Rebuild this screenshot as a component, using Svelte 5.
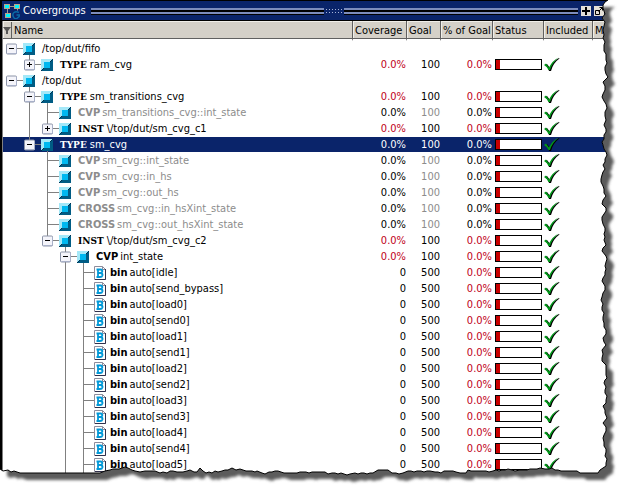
<script>
  const groups = [
    { level: 0, text: '/top/dut/fifo', open: true },
    { level: 1, kind: 'TYPE', text: 'ram_cvg', open: false, last: true, tone: 'low', goal: 100 },
    { level: 0, text: '/top/dut', open: true },
    { level: 1, kind: 'TYPE', text: 'sm_transitions_cvg', open: true, tone: 'low', goal: 100 },
    { level: 2, kind: 'CVP', text: 'sm_transitions_cvg::int_state', through: [1], dim: true, goal: 100 },
    { level: 2, kind: 'INST', text: '\\/top/dut/sm_cvg_c1', open: false, through: [1], last: true, tone: 'low', goal: 100 },
    { level: 1, kind: 'TYPE', text: 'sm_cvg', open: true, last: true, selected: true, goal: 100 },
    { level: 2, kind: 'CVP', text: 'sm_cvg::int_state', dim: true, goal: 100 },
    { level: 2, kind: 'CVP', text: 'sm_cvg::in_hs', dim: true, goal: 100 },
    { level: 2, kind: 'CVP', text: 'sm_cvg::out_hs', dim: true, goal: 100 },
    { level: 2, kind: 'CROSS', text: 'sm_cvg::in_hsXint_state', dim: true, goal: 100 },
    { level: 2, kind: 'CROSS', text: 'sm_cvg::out_hsXint_state', dim: true, goal: 100 },
    { level: 2, kind: 'INST', text: '\\/top/dut/sm_cvg_c2', open: true, last: true, tone: 'low', goal: 100 },
    { level: 3, kind: 'CVP', text: 'int_state', open: true, tone: 'low', goal: 100 },
  ];
  const bins = ['idle', 'send_bypass', 'load0', 'send0', 'load1', 'send1', 'load2', 'send2', 'load3', 'send3', 'load4', 'send4', 'load5'];
  const rows = [
    ...groups,
    ...bins.map((b) => ({ level: 4, kind: 'bin', text: `auto[${b}]`, bin: true, through: [3], tone: 'low', count: 0, goal: 500 })),
  ];
  const guideX = (level) => 8.5 + level * 18;

  // Torn paper outline: right edge going down, then bottom edge going left.
  const right = [[608,0],[605,2],[603,8],[605,14],[602,18],[605,22],[603,30],[604,35],[604,45],[606,60],[605,70],[608,77],[603,82],[605,90],[602,97],[606,104],[605,112],[606,120],[604,125],[606,132],[602,142],[606,152],[605,162],[603,172],[601,182],[606,196],[602,204],[606,208],[602,220],[605,228],[604,240],[606,245],[602,251],[606,256],[605,275],[602,281],[605,286],[602,297],[603,320],[606,330],[603,338],[606,345],[602,350],[602,358],[606,368],[607,378],[605,380],[606,403],[603,406],[605,413],[607,418],[603,423],[606,431],[603,438],[604,446],[606,452],[606,466],[600,470],[598,473]];
  const bottom = [[580,473],[577,471],[570,471],[558,470],[552,468],[545,469],[540,468],[520,470],[515,471],[508,469],[505,470],[480,471],[468,470],[466,473],[450,471],[435,472],[430,471],[408,471],[403,473],[392,473],[388,470],[378,470],[373,473],[355,473],[350,474],[335,473],[318,472],[300,472],[290,473],[275,471],[262,473],[257,471],[255,472],[240,469],[232,468],[228,470],[215,471],[206,473],[200,468],[197,472],[190,470],[180,472],[170,471],[160,473],[155,471],[145,471],[140,472],[135,471],[128,468],[125,467],[110,470],[105,471],[100,473],[20,473],[14,471],[8,470],[3,471],[0,469]];
  function rough(points, vertical) {
    const out = [];
    points.forEach(([x, y], i) => {
      out.push([x, y]);
      const next = points[i + 1];
      if (!next) return;
      const span = Math.abs(vertical ? next[1] - y : next[0] - x);
      if (span > 60) return;
      const n = Math.floor(span / 3);
      for (let k = 1; k < n; k++) {
        const t = k / n;
        const j = ((i * 7 + k * 5) % 3) - 1;
        out.push([Math.round(x + (next[0] - x) * t) + (vertical ? j : 0), Math.round(y + (next[1] - y) * t) + (vertical || j < 0 ? 0 : j)]);
      }
    });
    return out;
  }
  const edge = [...rough(right, true), ...rough(bottom, false)].map((p) => p.join(',')).join('L');
  const page = `M0,0L${edge}Z`;
  const outside = `M-5,-5H629V494H-5Z${page}`;
</script>

<main>
  <div class="panel">
    <header>
      <svg class="logo" width="16" height="16" viewBox="0 0 16 16" aria-hidden="true">
        <path d="M3.500 3v8M4 3.500h9.500v4" fill="none" stroke="#a89c8c" />
        <path d="M0 1h6v5H0zM10 1h6v5h-6zM1 10h6v5H1z" fill="#b8a48c" />
        <path d="M1 2h4v3H1zM11 2h4v3h-4zM2 11h4v3H2z" fill="#00f4ff" />
        <path d="M15 9.500q-3-1.500-5 0t-.5 4.500 4 1 2-3h-3" fill="none" stroke="#0a6ca8" stroke-width="1.500" />
      </svg>
      <h1>Covergroups</h1>
      <div class="grip"></div>
      <div class="dots"></div>
      <div class="grip"></div>
      <button aria-label="Maximize"><svg width="10" height="10" viewBox="0 0 10 10"><path d="M4 1h2v3h3v2H6v3H4V6H1V4h3z" /></svg></button>
      <button aria-label="Undock"><svg width="10" height="10" viewBox="0 0 10 10"><path d="M1.500 4.500h4v4h-4zM4.500 5.500l4-4M5.500 1.500h3v3" fill="none" stroke="#000" /></svg></button>
    </header>

    <table>
      <colgroup>
        <col /><col class="w54" /><col class="w34" /><col class="w52" /><col class="w51" /><col class="w49" /><col class="w16" />
      </colgroup>
      <thead>
        <tr>
          <th class="name">
            <div>
              <button class="filter" aria-label="Filter columns"><svg width="8" height="8" viewBox="0 0 8 8"><path d="M0 1h8L5 5v3H3V5z" fill="#555" /></svg></button>
              <span>Name</span>
            </div>
          </th>
          <th>Coverage</th><th>Goal</th><th>% of Goal</th><th>Status</th><th>Included</th><th>M</th>
        </tr>
      </thead>
      <tbody>
        {#each rows as row}
          {@const x = guideX(row.level)}
          {@const w = row.bin ? 106 : 38 + row.level * 18}
          <tr class:selected={row.selected} class:dim={row.dim} class:low={row.tone === 'low'}>
            <td class="tree">
              <div>
                <svg width={w} height="16" viewBox="0 0 {w} 16" aria-hidden="true">
                  <g stroke="#808080" fill="none">
                    {#each row.through ?? [] as l}<path d="M{guideX(l)} 0V16" />{/each}
                    {#if row.level > 0}<path d="M{x} 0V{row.last ? 8 : 16}" />{/if}
                    <path d="M{x} 7.500H{x + 13}" />
                    {#if row.open}<path d="M{x + 18} 12V16" />{/if}
                  </g>
                  {#if row.open !== undefined}
                    <rect x={x - 5} y="3" width="10" height="10" rx="1" fill="#f4f4fa" stroke="#8c94a8" />
                    <path d="M{x - 4} 12.500H{x + 5}V4" fill="none" stroke="#a8b0c8" />
                    <path d="M{x - 2.5} 7.500H{x + 2.5}" stroke="#000" />
                    {#if !row.open}<path d="M{x} 5V10" stroke="#000" />{/if}
                  {/if}
                  {#if row.bin}
                    <g transform="translate({x + 10.5} -1)">
                      <path d="M.5 2.500h8l3 3v10H.5z" fill="#fff" stroke="#8c8c9c" />
                      <path d="M8.500 2.500v3h3" fill="none" stroke="#8c8c9c" />
                      <path d="M11.500 5v10.500H1" fill="none" stroke="#30304c" />
                      <path d="M2.500 5.500h4q2 .3 1.800 2-.3 1.300-1.800 1.500 2.200.3 2 2.200-.4 1.800-2.500 1.800H2.500M4 5.500V13M4 9h3" fill="none" stroke="#0098d8" stroke-width="1.800" />
                    </g>
                  {:else}
                    <g transform="translate({x + 11.5} 2)">
                      <path d="M0 0h12L0 12z" fill="#a4e8f8" />
                      <path d="M12 0v12H0z" fill="#005c84" />
                      <path d="M3 3h6v6H3z" fill="#00b8f0" />
                      <path d="M12 0L9 3M3 9L0 12" stroke="#003050" />
                    </g>
                  {/if}
                </svg>
                {#if row.kind}<b class:slab={row.kind === 'TYPE' || row.kind === 'INST'}>{row.kind}</b>{/if}<span>{row.text}</span>
              </div>
            </td>
            {#if row.goal}
              <td class="cov" class:count={row.bin}>{row.count ?? '0.0%'}</td>
              <td class="goal">{row.goal}</td>
              <td class="pct">0.0%</td>
              <td class="status"><div class="bar"><i></i></div></td>
              <td class="check">
                <svg width="17" height="15" viewBox="0 0 17 15" role="img" aria-label="Included">
                  <path d="M2 8l2-1 3 4q3-7 9-10l.5.5Q10 6 8 14H6Q5 10 2 8z" fill="#000" />
                  <path d="M1 8l2-1.500 3 4Q9 4 15.500.5 9 6 7 13H5.500Q4 9.500 1 8z" fill="#009818" />
                </svg>
              </td>
              <td></td>
            {:else}
              <td colspan="6"></td>
            {/if}
          </tr>
        {/each}
      </tbody>
    </table>
  </div>

  <svg class="torn" viewBox="0 0 624 489" preserveAspectRatio="none" aria-hidden="true">
    <defs>
      <clipPath id="out"><path d={outside} clip-rule="evenodd" /></clipPath>
      <filter id="soft"><feGaussianBlur stdDeviation="1.7" /></filter>
    </defs>
    <g clip-path="url(#out)">
      <path d="M0 0H624V489H0z" fill="#fff" />
      <path d={page} transform="translate(7 7)" fill="#5c5c5c" filter="url(#soft)" />
    </g>
    <path d="M{edge}" fill="none" stroke="#000" />
  </svg>
</main>

<style>
  :global(body) { margin: 0; background: #fff; }
  main {
    position: relative;
    height: 100vh;
    overflow: hidden;
    font: 11px/15px 'DejaVu Sans Condensed', 'DejaVu Sans', sans-serif;
    color: #000;
  }
  .panel {
    box-sizing: border-box;
    min-height: 100vh;
    margin-right: 16px;
    border-left: 2px solid #000;
    border-top: 1px solid #000;
  }
  header {
    display: flex;
    align-items: center;
    height: 19px;
    padding: 0 4px 0 2px;
    background: #0a246a;
    border-bottom: 1px solid #000;
    color: #fff;
  }
  h1 { margin: 0 5px 0 3px; font-size: 11px; font-weight: 400; }
  .grip {
    flex: 1;
    height: 2px;
    border-top: 2px solid #7c8cbc;
    border-bottom: 2px solid #7c8cbc;
    background: #000;
    box-shadow: 0 1px #000;
  }
  .dots {
    width: 18px;
    height: 6px;
    margin: 0 1px;
    background: radial-gradient(circle, #a8b4d8 1px, transparent 1px) 0 0 / 3px 3px;
  }
  button { padding: 0; border: 0; background: #e4e0d8; }
  header button { width: 10px; height: 10px; margin-left: 3px; }
  header svg { display: block; }
  table {
    width: 100%;
    table-layout: fixed;
    border-spacing: 0;
    border-left: 1px solid #808080;
  }
  .w54 { width: 54px; }
  .w34 { width: 34px; }
  .w52 { width: 52px; }
  .w51 { width: 51px; }
  .w49 { width: 49px; }
  .w16 { width: 16px; }
  th, td { padding: 0; white-space: nowrap; }
  th {
    height: 18px;
    padding-left: 2px;
    text-align: left;
    font-weight: 400;
    background: #d4d0c8;
    background-clip: padding-box;
    border-left: 1px solid #606060;
    border-bottom: 2px solid #fff;
    box-shadow: inset 0 -1px #606060, inset 1px 1px #f0eee8;
  }
  th.name { border-left: 0; padding: 0; }
  th div { display: flex; align-items: center; height: 18px; }
  .filter {
    display: flex;
    align-items: center;
    width: 9px;
    height: 17px;
    margin-right: 2px;
    background: none;
    border-right: 1px solid #606060;
  }
  td { height: 15px; border-bottom: 1px solid transparent; background-clip: padding-box; text-align: right; }
  .tree div { display: flex; height: 15px; }
  .tree svg { flex: none; margin-right: 1px; overflow: visible; }
  .tree b { margin-right: 2px; }
  .tree b.slab { margin-right: 3px; font: bold 10px/15px 'DejaVu Serif Condensed', 'DejaVu Serif', serif; }
  .selected td { background-color: #0a246a; color: #fff; }
  .dim .tree, .dim .goal { color: #8c8c8c; }
  .low .pct, .low .cov { color: #c00020; }
  .low .count { color: #000; }
  .bar {
    display: flex;
    box-sizing: border-box;
    width: 47px;
    height: 11px;
    margin-left: 3px;
    border: 1px solid #000;
    background: #fff;
  }
  .bar i { width: 4px; background: #c80000; }
  .check svg { display: block; }
  .torn { position: absolute; inset: 0; width: 100%; height: 100%; }
</style>
